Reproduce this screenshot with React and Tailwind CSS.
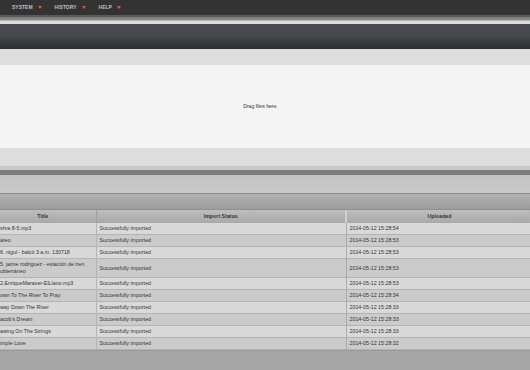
import React from "react";

const rows = [
  { title: "shra 8-5.mp3", date: "2014-05-12 15:28:54" },
  { title: "áreo", date: "2014-05-12 15:28:53" },
  { title: "6. nigul - balcó 3 a.m. 130718", date: "2014-05-12 15:28:53" },
  { title: ["5. jaime rodriguez - estación de tren", "ubterráneo"], date: "2014-05-12 15:28:53" },
  { title: "2.EnriqueMaraver-ElLlano.mp3", date: "2014-05-12 15:28:53" },
  { title: "own To The River To Pray", date: "2014-05-12 15:28:34" },
  { title: "way Down The River", date: "2014-05-12 15:28:33" },
  { title: "acob's Dream", date: "2014-05-12 15:28:33" },
  { title: "awing On The Strings", date: "2014-05-12 15:28:33" },
  { title: "imple Love", date: "2014-05-12 15:28:32" },
];

const Caret = () => (
  <svg width="4" height="3" viewBox="0 0 4 3" className="ml-[5px]">
    <path d="M0 0 L4 0 L2 3 Z" fill="#e0572a" />
  </svg>
);

const NavItem = ({ label }) => (
  <div className="flex items-center">
    <span className="text-[5px] font-bold text-[#b9bfc9]">{label}</span>
    <Caret />
  </div>
);

export default function App() {
  return (
    <div className="w-[530px] h-[370px] overflow-hidden bg-[#a6a6a6] font-['Liberation_Sans',Arial,sans-serif]">
      {/* top menu */}
      <div className="h-[15px] bg-[#333333] flex items-center gap-[13px] pl-[12px]">
        <NavItem label="SYSTEM" />
        <NavItem label="HISTORY" />
        <NavItem label="HELP" />
      </div>
      <div className="h-[2px] bg-[#5a5a5a]" />
      <div className="h-[3px] bg-gradient-to-b from-[#7a7a7a] to-[#8e8e8e]" />
      <div className="h-[1px] bg-[#b2b2b2]" />
      <div className="h-[3px] bg-[#dcdcdc]" />

      {/* dark title panel */}
      <div className="h-[25px] bg-gradient-to-b from-[#474b4f] via-[#44474b] to-[#2c2d2f]" />

      {/* upload area */}
      <div className="h-[16px] bg-[#dddddd]" />
      <div className="h-[83px] bg-[#f4f4f4] flex items-center justify-center pr-[9px]">
        <span className="text-[5.1px] text-[#333]">Drag files here.</span>
      </div>
      <div className="h-[18px] bg-[#dddddd]" />
      <div className="h-[4px] bg-[#c9c9c9]" />
      <div className="h-[5px] bg-[#7b7b7b]" />
      <div className="h-[18px] bg-gradient-to-b from-[#c3c3c3] to-[#c9c9c9]" />
      <div className="h-[1px] bg-[#8a8a8a]" />
      <div className="h-[15px] bg-gradient-to-b from-[#b2b2b2] to-[#9c9c9c]" />
      <div className="h-[1px] bg-[#8f8f8f]" />

      {/* history table */}
      <table className="-ml-[10px] w-[542px] table-fixed border-collapse text-[5.3px] text-[#333]">
        <colgroup>
          <col className="w-[106px]" />
          <col className="w-[250px]" />
          <col />
        </colgroup>
        <thead>
          <tr className="h-[13px] bg-gradient-to-b from-[#bdbdbd] to-[#a9a9a9]">
            <th className="font-bold text-center border-r border-[#a0a0a0]">Title</th>
            <th className="font-bold text-center border-r-2 border-[#d0d0d0]">Import Status</th>
            <th className="font-bold text-center">Uploaded</th>
          </tr>
        </thead>
        <tbody>
          {rows.map((r, i) => (
            <tr
              key={i}
              className={
                (i % 2 === 0 ? "bg-[#d9d9d9]" : "bg-[#cbcbcb]") +
                " border-b border-[#b4b4b4] " +
                (Array.isArray(r.title) ? "h-[19px]" : "h-[11.9px]")
              }
            >
              <td className="pl-[10px] pr-[2px] py-0 leading-[7px] border-r border-[#b6b6b6] whitespace-nowrap overflow-hidden">
                {Array.isArray(r.title) ? (
                  <>
                    {r.title[0]}
                    <br />
                    {r.title[1]}
                  </>
                ) : (
                  r.title
                )}
              </td>
              <td className="pl-[3px] py-0 leading-[7px] border-r border-[#aaaaaa]">Successfully imported</td>
              <td className="pl-[3px] py-0 leading-[7px]">{r.date}</td>
            </tr>
          ))}
        </tbody>
      </table>
      <div className="h-[1px] bg-[#9a9a9a]" />
    </div>
  );
}
